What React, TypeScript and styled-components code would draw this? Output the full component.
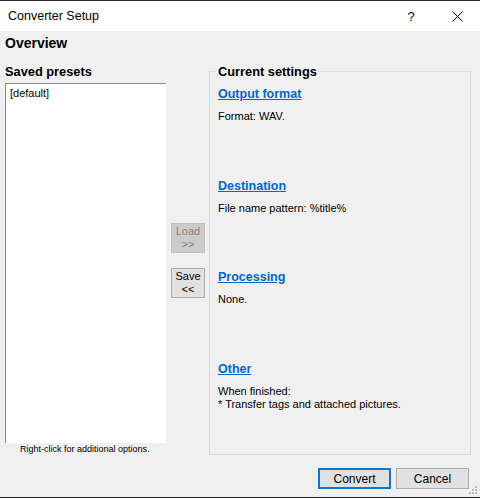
import React from "react";
import styled, { createGlobalStyle } from "styled-components";

const Global = createGlobalStyle`
  html, body { margin: 0; padding: 0; background: #f0f0f0; }
  body { font-family: "Liberation Sans", Arial, sans-serif; }
  * { box-sizing: border-box; }
`;

const Window = styled.div`
  width: 480px;
  height: 498px;
  border-top: 1px solid #2b2b2b;
  border-bottom: 1px solid #2b2b2b;
  display: flex;
  flex-direction: column;
  background: #f0f0f0;
  overflow: hidden;
`;

const TitleBar = styled.div`
  height: 30px;
  background: #fff;
  display: flex;
  align-items: center;
  padding-left: 8px;
  font-size: 12.5px;
  color: #000;
`;

const Title = styled.div`
  flex: 1;
`;

const TitleButton = styled.div<{ $w: number }>`
  width: ${(p) => p.$w}px;
  height: 30px;
  display: flex;
  align-items: center;
  justify-content: center;
  font-size: 13px;
`;

const Body = styled.div`
  flex: 1;
  display: flex;
  flex-direction: column;
  position: relative;
`;

const Heading = styled.div`
  padding: 4px 5px 0;
  height: 33px;
  font-size: 14px;
  line-height: 17px;
  font-weight: bold;
  color: #000;
`;

const Main = styled.div`
  display: flex;
  height: 391px;
`;

const LeftCol = styled.div`
  width: 166px;
  padding-left: 5px;
  display: flex;
  flex-direction: column;
`;

const BoldLabel = styled.div`
  font-size: 12.8px;
  font-weight: bold;
  line-height: 15px;
  height: 15px;
  margin-bottom: 4px;
  color: #000;
`;

const ListBox = styled.div`
  height: 360px;
  background: #fff;
  border-top: 1px solid #8a8a8a;
  border-left: 1px solid #8a8a8a;
  padding: 3px 4px;
  font-size: 11px;
  line-height: 13px;
  color: #000;
`;

const Hint = styled.div`
  padding-left: 15px;
  font-size: 9px;
  line-height: 12px;
  color: #000;
`;

const MiddleCol = styled.div`
  width: 43px;
  padding: 159px 0 0 5px;
  display: flex;
  flex-direction: column;
  gap: 15px;
`;

const SideButton = styled.div<{ $disabled?: boolean }>`
  width: 34px;
  height: 30px;
  display: flex;
  flex-direction: column;
  align-items: center;
  justify-content: center;
  font-size: 11px;
  line-height: 13px;
  background: ${(p) => (p.$disabled ? "#cccccc" : "#e1e1e1")};
  border: 1px solid ${(p) => (p.$disabled ? "#bfbfbf" : "#adadad")};
  color: ${(p) => (p.$disabled ? "#838383" : "#000")};
`;

const GroupBox = styled.div`
  position: relative;
  margin-top: 7px;
  width: 262px;
  height: 384px;
  border: 1px solid #dcdcdc;
  padding: 14px 0 0 8px;
`;

const Legend = styled.div`
  position: absolute;
  top: -8px;
  left: 6px;
  padding: 0 2px;
  background: #f0f0f0;
  font-size: 12.8px;
  font-weight: bold;
  line-height: 15px;
  color: #000;
`;

const Section = styled.div`
  height: 91.5px;
`;

const Link = styled.div`
  font-size: 12.5px;
  font-weight: bold;
  line-height: 16px;
  color: #0066cc;
  text-decoration: underline;
  margin-bottom: 8px;
`;

const Desc = styled.div`
  font-size: 11px;
  line-height: 13px;
  color: #000;
  white-space: pre;
`;

const Footer = styled.div`
  display: flex;
  justify-content: flex-end;
  gap: 5px;
  padding: 13px 11px 0 0;
`;

const DialogButton = styled.div<{ $default?: boolean }>`
  width: 73px;
  height: 21px;
  display: flex;
  align-items: center;
  justify-content: center;
  font-size: 12px;
  color: #000;
  background: #e1e1e1;
  border: ${(p) => (p.$default ? "2px solid #0078d7" : "1px solid #adadad")};
`;

const Grip = styled.svg`
  position: absolute;
  right: 2px;
  bottom: 2px;
`;

const sections = [
  { title: "Output format", desc: "Format: WAV." },
  { title: "Destination", desc: "File name pattern: %title%" },
  { title: "Processing", desc: "None." },
  { title: "Other", desc: "When finished:\n* Transfer tags and attached pictures." },
];

export default function App() {
  return (
    <>
      <Global />
      <Window>
        <TitleBar>
          <Title>Converter Setup</Title>
          <TitleButton $w={46}>?</TitleButton>
          <TitleButton $w={46}>
            <svg width="11" height="11" viewBox="0 0 11 11">
              <path d="M0.5 0.5 L10.5 10.5 M10.5 0.5 L0.5 10.5" stroke="#000" strokeWidth="1" fill="none" />
            </svg>
          </TitleButton>
        </TitleBar>
        <Body>
          <Heading>Overview</Heading>
          <Main>
            <LeftCol>
              <BoldLabel>Saved presets</BoldLabel>
              <ListBox>[default]</ListBox>
              <Hint>Right-click for additional options.</Hint>
            </LeftCol>
            <MiddleCol>
              <SideButton $disabled>
                <span>Load</span>
                <span>&gt;&gt;</span>
              </SideButton>
              <SideButton>
                <span>Save</span>
                <span>&lt;&lt;</span>
              </SideButton>
            </MiddleCol>
            <GroupBox>
              <Legend>Current settings</Legend>
              {sections.map((s) => (
                <Section key={s.title}>
                  <Link>{s.title}</Link>
                  <Desc>{s.desc}</Desc>
                </Section>
              ))}
            </GroupBox>
          </Main>
          <Footer>
            <DialogButton $default>Convert</DialogButton>
            <DialogButton>Cancel</DialogButton>
          </Footer>
          <Grip width="9" height="9" viewBox="0 0 9 9">
            {[
              [6, 0],
              [3, 3],
              [6, 3],
              [0, 6],
              [3, 6],
              [6, 6],
            ].map(([x, y]) => (
              <rect key={`${x}-${y}`} x={x} y={y} width="2" height="2" fill="#bcbcbc" />
            ))}
          </Grip>
        </Body>
      </Window>
    </>
  );
}
